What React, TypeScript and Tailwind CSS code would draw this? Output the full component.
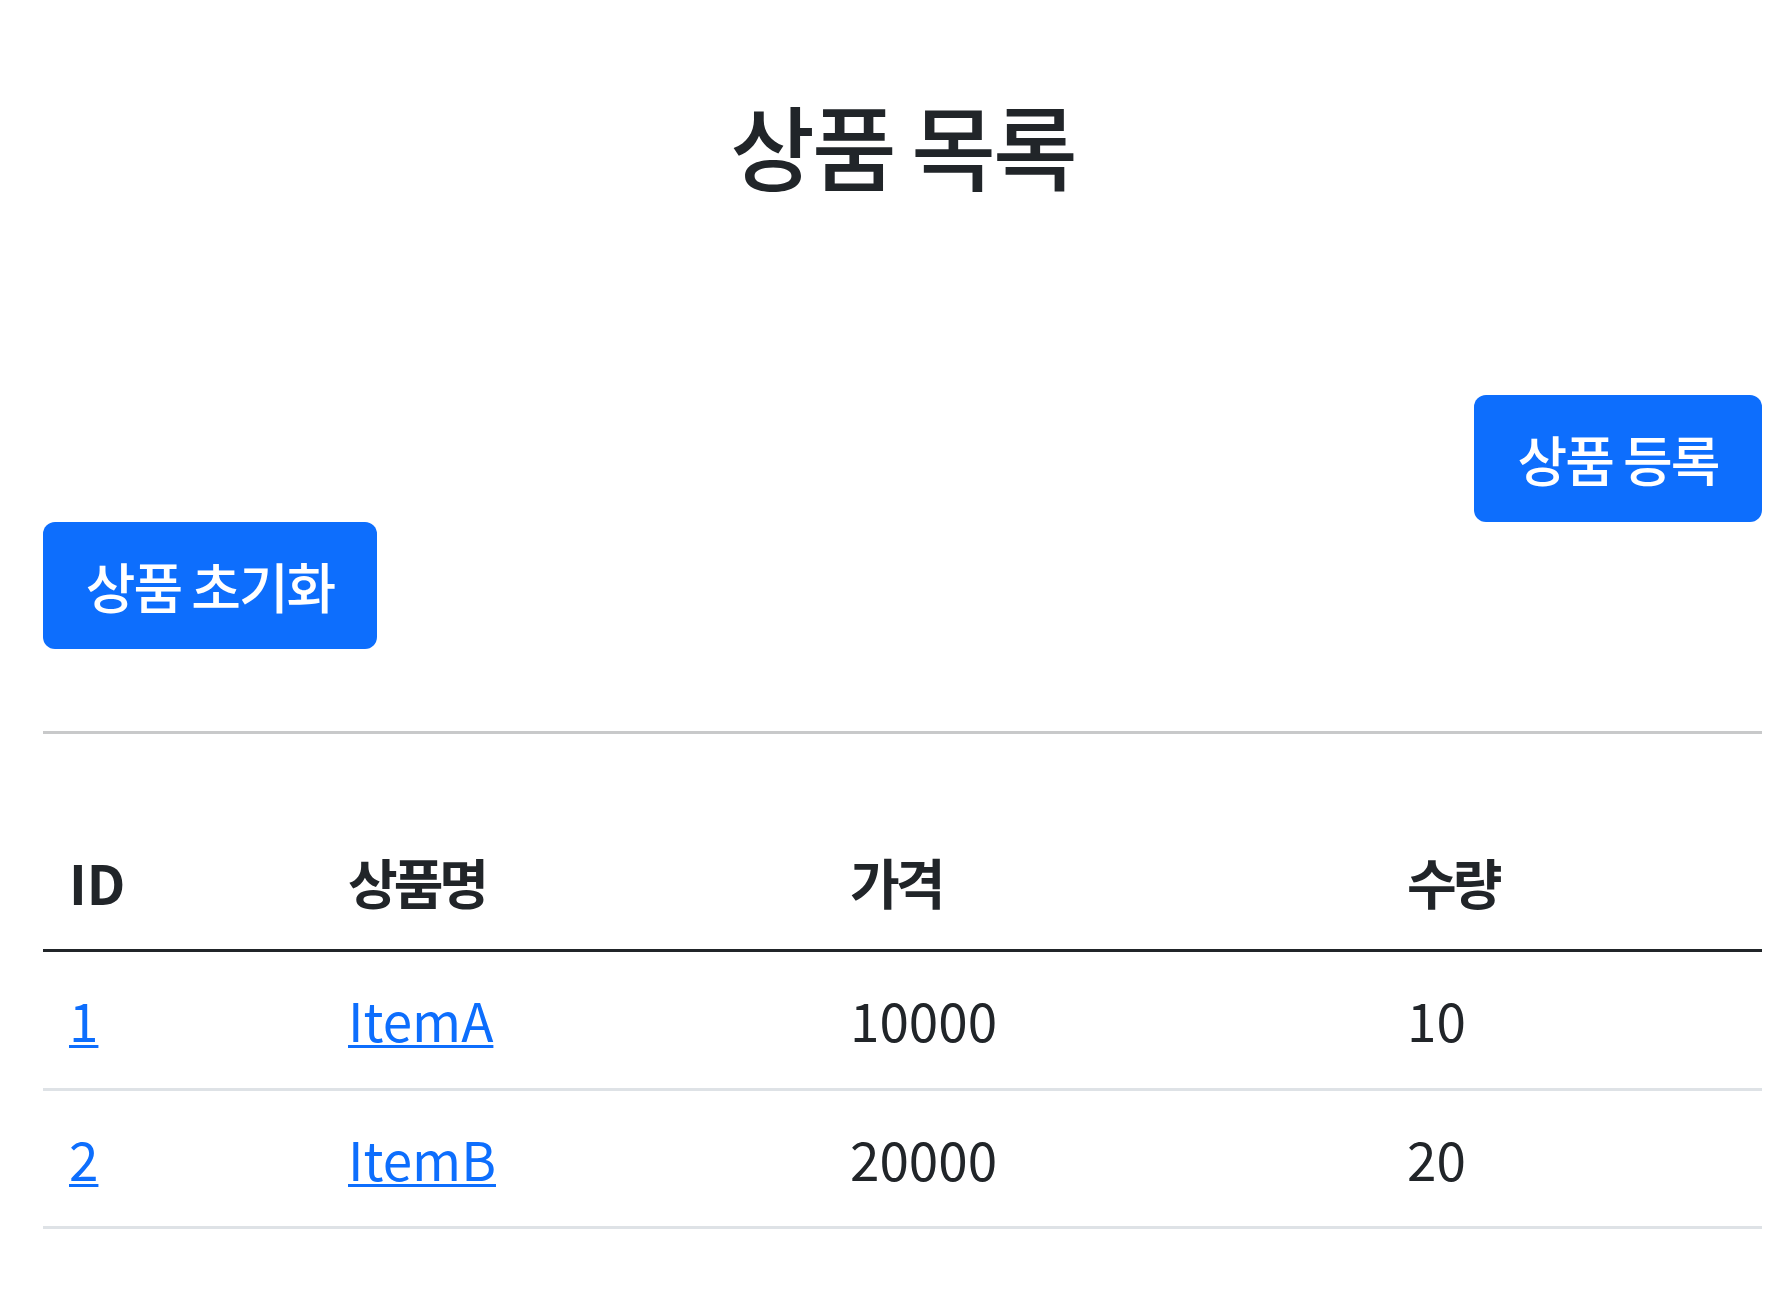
import React from "react";

const latin = { fontFamily: '"Noto Sans CJK KR", "Noto Sans", sans-serif' };
const kr = { fontFamily: '"Noto Sans CJK KR", sans-serif' };

const rows = [
  { id: "1", name: "ItemA", price: "10000", qty: "10" },
  { id: "2", name: "ItemB", price: "20000", qty: "20" },
];

const cols = "grid grid-cols-[279px_502px_557px_1fr]";

export default function App() {
  return (
    <div className="min-h-screen w-full bg-white text-[#212529]" style={latin}>
      <div className="pl-[43px] pr-[24px]">
        <div className="h-[395px] pt-[91px] text-center">
          <h2 className="text-[92px] leading-[106px] font-medium tracking-[-3px]" style={kr}>
            상품 목록
          </h2>
        </div>

        <div className="flex justify-end">
          <button
            type="button"
            className="flex h-[127px] w-[288px] items-center justify-center rounded-[12px] bg-[#0d6efd] text-[54px] leading-none font-medium tracking-[-2px] text-white"
            style={kr}
          >
            상품 등록
          </button>
        </div>

        <div className="flex">
          <button
            type="button"
            className="flex h-[127px] w-[334px] items-center justify-center rounded-[12px] bg-[#0d6efd] text-[54px] leading-none font-medium tracking-[-2px] text-white"
            style={kr}
          >
            상품 초기화
          </button>
        </div>

        <div className="mt-[82px] h-[3px] w-full bg-[#c8c9ca]" />

        <div className="mt-[79px]">
          <div className={`${cols} h-[139px] items-center border-b-[3px] border-[#212529] text-[54px] font-bold`}>
            <div className="pl-[26px]">ID</div>
            <div className="pl-[26px] tracking-[-4px]">상품명</div>
            <div className="pl-[26px] tracking-[-4px]">가격</div>
            <div className="pl-[26px] tracking-[-4px]">수량</div>
          </div>
          {rows.map((r, i) => (
            <div
              key={r.id}
              className={`${cols} ${i === 0 ? "h-[139px]" : "h-[138px]"} items-center border-b-[3px] border-[#dee2e6] text-[53px]`}
            >
              <div className="pl-[26px]">
                <a href="#" className="text-[#0d6efd] underline decoration-[3px] underline-offset-[3px]">
                  {r.id}
                </a>
              </div>
              <div className="pl-[26px]">
                <a href="#" className="text-[#0d6efd] underline decoration-[3px] underline-offset-[3px]">
                  {r.name}
                </a>
              </div>
              <div className="pl-[26px]">{r.price}</div>
              <div className="pl-[26px]">{r.qty}</div>
            </div>
          ))}
        </div>
      </div>
    </div>
  );
}
